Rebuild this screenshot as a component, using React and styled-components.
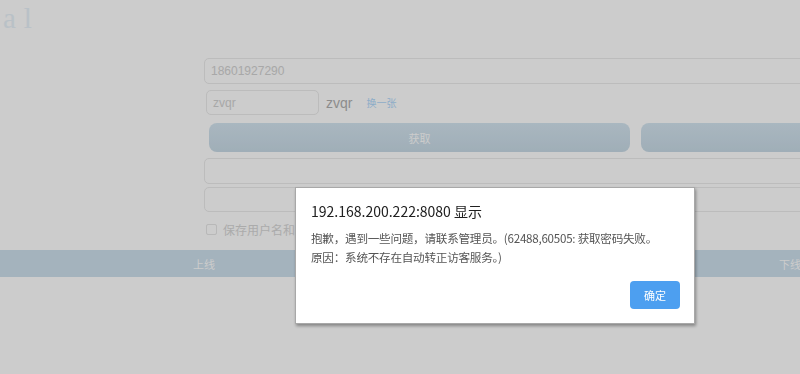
import React from "react";
import styled, { createGlobalStyle } from "styled-components";

const Global = createGlobalStyle`
  html, body { margin: 0; padding: 0; overflow: hidden; background: #ffffff; }
  body { width: 800px; height: 374px; font-family: "Liberation Sans", Arial, sans-serif; }
`;

const Page = styled.div`
  position: relative;
  width: 1200px;
  height: 374px;
  background: #ffffff;
`;

const Logo = styled.div`
  height: 52px;
  padding-left: 3px;
  font-family: "Liberation Serif", serif;
  font-size: 29px;
  line-height: 36px;
  letter-spacing: 8px;
  color: #e8f2f9;
`;

const Form = styled.div`
  display: flex;
  flex-direction: column;
  padding-left: 204px;
  width: 1000px;
`;

const Input = styled.div`
  box-sizing: border-box;
  height: ${(p) => p.$h || 26}px;
  margin-top: ${(p) => p.$mt || 0}px;
  margin-left: ${(p) => p.$ml || 0}px;
  width: ${(p) => p.$w || "100%"};
  border: 1px solid #ebebeb;
  border-radius: 5px;
  padding-left: 6px;
  display: flex;
  align-items: center;
  font-size: 12px;
  color: #d2d2d2;
  background: #ffffff;
`;

const CodeRow = styled.div`
  display: flex;
  align-items: center;
  margin-top: 6px;
  margin-left: 2px;
`;

const CodeText = styled.span`
  margin-left: 7px;
  font-size: 14px;
  color: #b0b0b0;
`;

const Swap = styled.span`
  margin-left: 14px;
  font-family: "Noto Sans CJK SC", sans-serif;
  font-size: 10px;
  color: #b0d8fb;
`;

const BtnRow = styled.div`
  display: flex;
  gap: 11px;
  margin-top: 8px;
  margin-left: 5px;
`;

const Btn = styled.div`
  height: 29px;
  width: ${(p) => p.$w}px;
  border-radius: 8px;
  background: linear-gradient(#d4e5f0, #c8dae6);
  color: #ffffff;
  font-family: "Noto Sans CJK SC", sans-serif;
  font-size: 11px;
  display: flex;
  align-items: center;
  justify-content: center;
`;

const CheckRow = styled.div`
  display: flex;
  align-items: center;
  gap: 6px;
  margin-top: 9px;
  margin-left: 2px;
  font-family: "Noto Sans CJK SC", sans-serif;
  font-size: 12px;
  color: #d6d6d6;
`;

const Box = styled.span`
  width: 9px;
  height: 9px;
  border: 1px solid #e6e6e6;
  border-radius: 2px;
`;

const Bar = styled.div`
  display: flex;
  margin-top: 12px;
  height: 27px;
  background: #cde0ed;
  color: #ffffff;
  font-family: "Noto Sans CJK SC", sans-serif;
  font-size: 11px;
`;

const BarCell = styled.div`
  width: ${(p) => p.$w}px;
  display: flex;
  align-items: center;
  justify-content: center;
`;

const Overlay = styled.div`
  position: fixed;
  inset: 0;
  background: rgba(0, 0, 0, 0.2);
`;

const Dialog = styled.div`
  position: fixed;
  left: 295px;
  top: 187px;
  width: 400px;
  height: 137px;
  box-sizing: border-box;
  background: #ffffff;
  border: 1px solid #a8a8a8;
  box-shadow: 1px 2px 3px rgba(0, 0, 0, 0.35);
  padding: 13px 14px 14px 15px;
  display: flex;
  flex-direction: column;
  font-family: "Noto Sans CJK SC", sans-serif;
`;

const Title = styled.div`
  font-size: 14px;
  line-height: 20px;
  color: #202020;
`;

const Msg = styled.div`
  margin-top: 8px;
  font-size: 11.6px;
  letter-spacing: -0.25px;
  line-height: 19px;
  color: #555555;
`;

const Actions = styled.div`
  margin-top: auto;
  display: flex;
  justify-content: flex-end;
`;

const OkBtn = styled.div`
  width: 50px;
  height: 28px;
  border-radius: 4px;
  background: #4d9ff0;
  color: #ffffff;
  font-size: 11px;
  display: flex;
  align-items: center;
  justify-content: center;
`;

export default function App() {
  return (
    <>
      <Global />
      <Page>
        <Logo>al</Logo>
        <Form>
          <Input $mt={6}>18601927290</Input>
          <CodeRow>
            <Input $w="113px" $h={25}>zvqr</Input>
            <CodeText>zvqr</CodeText>
            <Swap>换一张</Swap>
          </CodeRow>
          <BtnRow>
            <Btn $w={421}>获取</Btn>
            <Btn $w={400} />
          </BtnRow>
          <Input $mt={6} />
          <Input $mt={3} $h={25} />
          <CheckRow>
            <Box />
            保存用户名和密码
          </CheckRow>
        </Form>
        <Bar>
          <BarCell $w={408}>上线</BarCell>
          <BarCell $w={764}>下线</BarCell>
        </Bar>
        <Overlay />
        <Dialog>
          <Title>192.168.200.222:8080 显示</Title>
          <Msg>
            抱歉，遇到一些问题，请联系管理员。(62488,60505: 获取密码失败。
            <br />
            原因：系统不存在自动转正访客服务。)
          </Msg>
          <Actions>
            <OkBtn>确定</OkBtn>
          </Actions>
        </Dialog>
      </Page>
    </>
  );
}
